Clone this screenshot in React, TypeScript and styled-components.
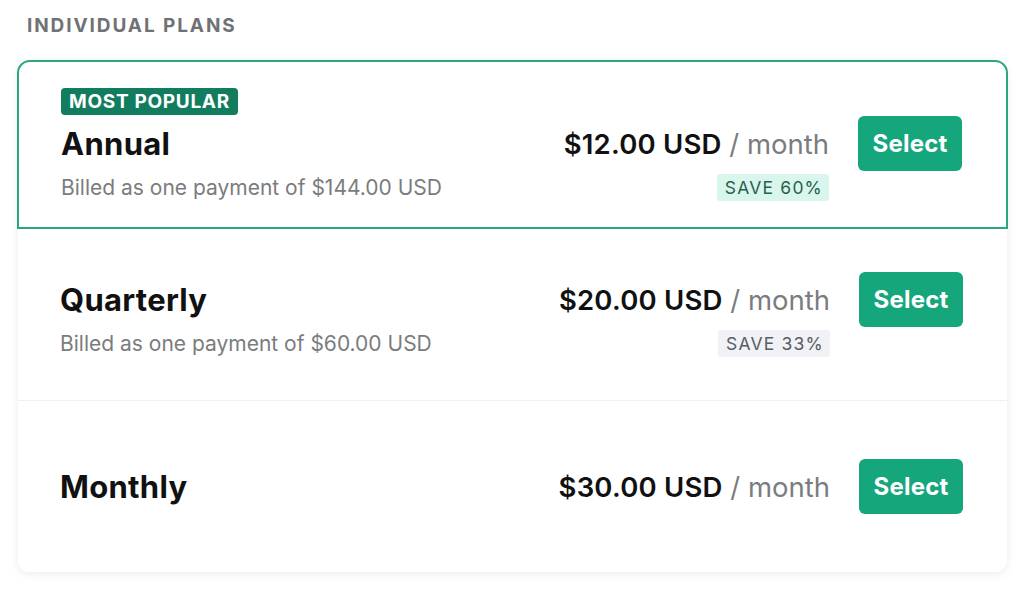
import React from "react";
import styled, { createGlobalStyle } from "styled-components";

const Global = createGlobalStyle`
  html, body { margin: 0; padding: 0; background: #ffffff; }
  body { font-family: Inter, "Noto Sans", "Liberation Sans", sans-serif; -webkit-font-smoothing: antialiased; }
`;

const Page = styled.div`
  width: 1024px;
  height: 590px;
  box-sizing: border-box;
  padding: 14px 17px 0 18px;
  display: flex;
  flex-direction: column;
`;

const Heading = styled.h2`
  margin: 0 0 0 9px;
  font-size: 19px;
  line-height: 24px;
  font-weight: 700;
  letter-spacing: 1.9px;
  color: #707174;
  text-transform: uppercase;
`;

const Card = styled.div`
  margin-top: 22px;
  background: #fff;
  border-radius: 12px;
  box-shadow: 0 2px 10px rgba(0, 0, 0, 0.08);
  display: flex;
  flex-direction: column;
`;

const Row = styled.div<{ $featured?: boolean; $h: number; $divider?: boolean; $last?: boolean }>`
  box-sizing: border-box;
  height: ${(p) => p.$h}px;
  display: grid;
  grid-template-columns: 1fr auto auto;
  column-gap: 29px;
  align-content: center;
  align-items: center;
  padding: 0 44px 0 42px;
  border: ${(p) => (p.$featured ? "2px solid #2aa782" : "none")};
  border-radius: ${(p) => (p.$featured ? "13px 13px 0 0" : p.$last ? "0 0 12px 12px" : "0")};
  border-bottom: ${(p) => (p.$divider ? "1px solid #f0f0f0" : p.$featured ? "2px solid #2aa782" : "none")};
  margin: ${(p) => (p.$featured ? "0 -1px" : "0")};
  background: #ffffff;
`;

const Popular = styled.span`
  grid-column: 1 / 2;
  justify-self: start;
  margin-bottom: 1px;
  background: #117d5e;
  color: #ffffff;
  font-size: 19px;
  font-weight: 700;
  letter-spacing: 0.7px;
  line-height: 27px;
  padding: 0 8px;
  border-radius: 4px;
`;

const Title = styled.div`
  grid-column: 1;
  font-size: 31px;
  font-weight: 700;
  color: #111111;
  letter-spacing: 0.3px;
`;

const Price = styled.div`
  grid-column: 2;
  justify-self: end;
  font-size: 27.5px;
  color: #111;
  white-space: nowrap;
`;

const Amount = styled.span`
  font-weight: 600;
  letter-spacing: 0.2px;
`;

const Per = styled.span`
  font-weight: 400;
  color: #7a7c7f;
`;

const SelectButton = styled.button`
  grid-column: 3;
  width: 104px;
  height: 55px;
  border: none;
  border-radius: 6px;
  background: #16a67c;
  color: #ffffff;
  font-family: inherit;
  font-size: 24px;
  font-weight: 700;
  letter-spacing: 0.2px;
  cursor: pointer;
`;

const Billed = styled.div`
  grid-column: 1;
  margin-top: 3px;
  font-size: 21px;
  color: #7b7c7e;
`;

const Save = styled.span<{ $tone: "green" | "gray" }>`
  grid-column: 2;
  justify-self: end;
  margin-top: 3px;
  font-size: 17.5px;
  letter-spacing: 1.2px;
  line-height: 27px;
  padding: 0 6px 0 8px;
  border-radius: 3px;
  background: ${(p) => (p.$tone === "green" ? "#d9f6ec" : "#f0f2f5")};
  color: ${(p) => (p.$tone === "green" ? "#2b5e51" : "#575c65")};
`;

type Plan = {
  name: string;
  price: string;
  billed?: string;
  save?: string;
  tone?: "green" | "gray";
  popular?: boolean;
  h: number;
};

const plans: Plan[] = [
  { name: "Annual", price: "$12.00 USD", billed: "Billed as one payment of $144.00 USD", save: "SAVE 60%", tone: "green", popular: true, h: 169 },
  { name: "Quarterly", price: "$20.00 USD", billed: "Billed as one payment of $60.00 USD", save: "SAVE 33%", tone: "gray", h: 172 },
  { name: "Monthly", price: "$30.00 USD", h: 171 },
];

export default function App() {
  return (
    <>
      <Global />
      <Page>
        <Heading>Individual Plans</Heading>
        <Card>
          {plans.map((p, i) => (
            <Row
              key={p.name}
              $featured={p.popular}
              $h={p.h}
              $divider={i === 1}
              $last={i === plans.length - 1}
            >
              {p.popular && <Popular>MOST POPULAR</Popular>}
              <Title>{p.name}</Title>
              <Price>
                <Amount>{p.price}</Amount> <Per>/ month</Per>
              </Price>
              <SelectButton>Select</SelectButton>
              {p.billed && <Billed>{p.billed}</Billed>}
              {p.save && <Save $tone={p.tone!}>{p.save}</Save>}
            </Row>
          ))}
        </Card>
      </Page>
    </>
  );
}
